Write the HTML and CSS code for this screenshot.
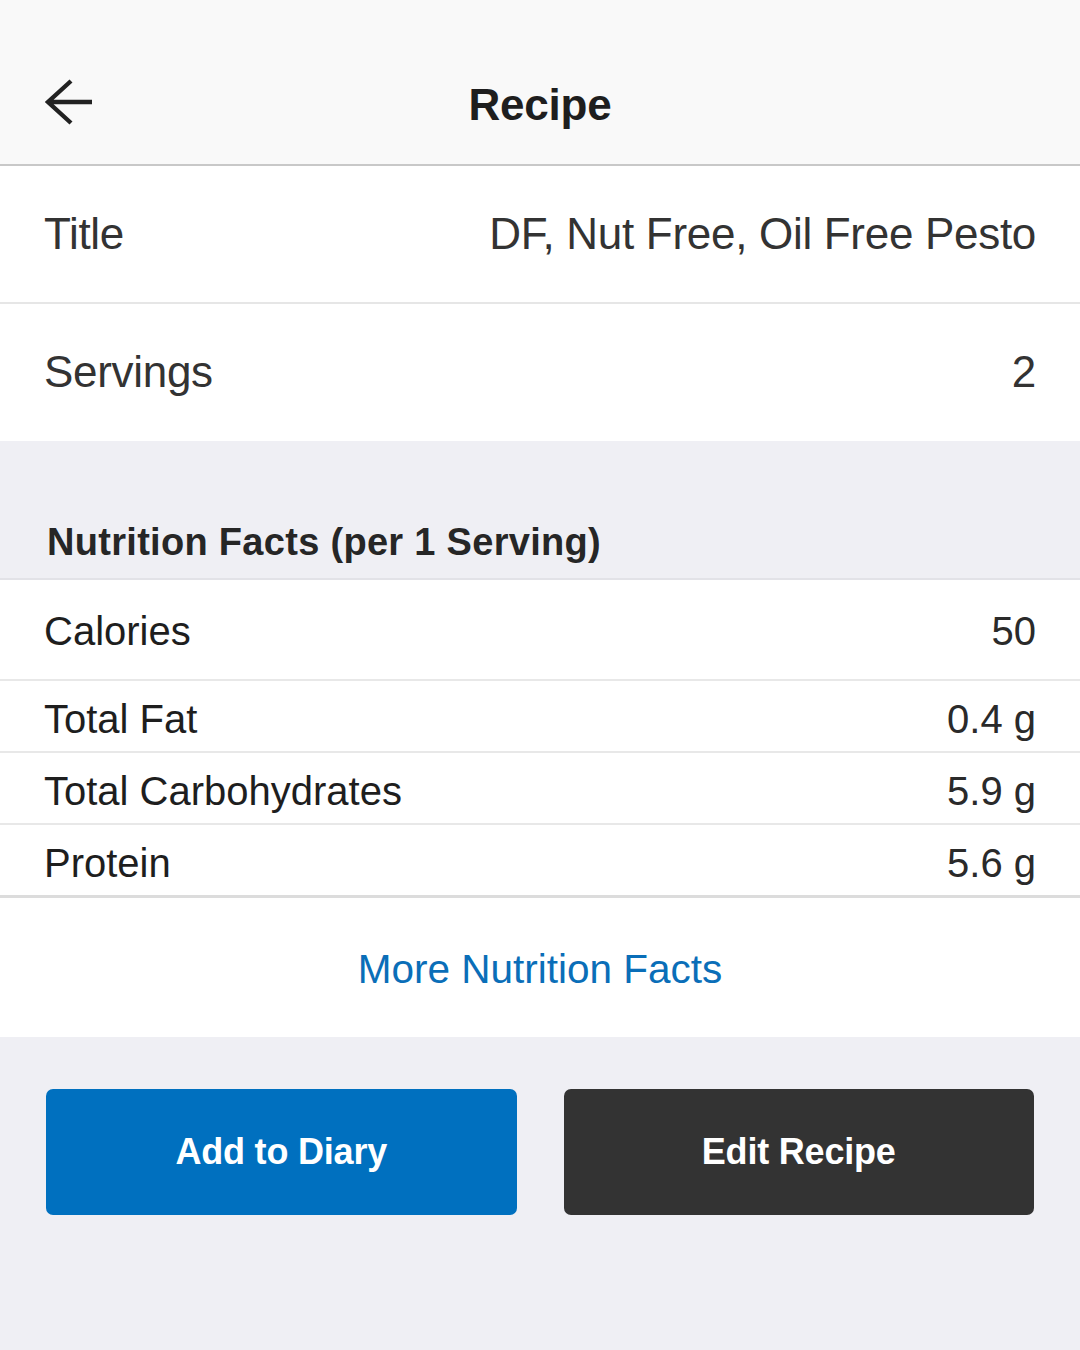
FILE: index.html
```html
<!DOCTYPE html>
<html lang="en">
<head>
<meta charset="utf-8">
<title>Recipe</title>
<link rel="stylesheet" href="styles.css">
</head>
<body>
<div class="screen">
  <header class="topbar">
    <button class="back" aria-label="Back">
      <svg class="back-icon" viewBox="0 0 48 52" width="48" height="52">
        <path d="M27 2 L4 23 L27 44 M4 23 H48" fill="none" stroke="#222" stroke-width="4.4" stroke-linejoin="miter"/>
      </svg>
    </button>
    <h1 class="topbar-title">Recipe</h1>
    <span class="topbar-spacer"></span>
  </header>

  <section class="group">
    <div class="field-row">
      <span class="field-label">Title</span>
      <span class="field-value">DF, Nut Free, Oil Free Pesto</span>
    </div>
    <div class="field-row field-row--last">
      <span class="field-label">Servings</span>
      <span class="field-value">2</span>
    </div>
  </section>

  <div class="section-head">
    <h2 class="section-title">Nutrition Facts (per 1 Serving)</h2>
  </div>

  <section class="nutrition">
    <div class="nut-row nut-row--cal">
      <span class="nut-label">Calories</span>
      <span class="nut-value">50</span>
    </div>
    <div class="nut-row">
      <span class="nut-label">Total Fat</span>
      <span class="nut-value">0.4 g</span>
    </div>
    <div class="nut-row">
      <span class="nut-label">Total Carbohydrates</span>
      <span class="nut-value">5.9 g</span>
    </div>
    <div class="nut-row nut-row--last">
      <span class="nut-label">Protein</span>
      <span class="nut-value">5.6 g</span>
    </div>
  </section>

  <div class="more">
    <a class="more-link" href="#">More Nutrition Facts</a>
  </div>

  <footer class="actions">
    <button class="btn btn--primary">Add to Diary</button>
    <button class="btn btn--dark">Edit Recipe</button>
  </footer>
</div>
</body>
</html>
```

FILE: styles.css
```css
* {
  box-sizing: border-box;
}

html, body {
  margin: 0;
  padding: 0;
  background: #efeff4;
}

body {
  font-family: "Liberation Sans", Arial, sans-serif;
  color: #222;
}

.screen {
  width: 1080px;
  min-height: 1350px;
  background: #efeff4;
  display: flex;
  flex-direction: column;
}

/* Top bar */
.topbar {
  display: grid;
  grid-template-columns: 1fr auto 1fr;
  align-items: start;
  padding: 79px 44px 33px;
  background: #f9f9f9;
  border-bottom: 2px solid #c8c8c8;
}

.back {
  justify-self: start;
  background: none;
  border: 0;
  padding: 0;
  margin: 0;
  width: 48px;
  height: 52px;
  display: block;
}

.back-icon {
  display: block;
}

.topbar-title {
  margin: 0;
  font-size: 44px;
  line-height: 52px;
  font-weight: 700;
  color: #1e1e1e;
  letter-spacing: -0.2px;
}

/* Title / Servings */
.group {
  background: #fff;
}

.field-row {
  display: flex;
  justify-content: space-between;
  align-items: center;
  padding: 42px 44px 42px;
  border-bottom: 2px solid #e6e6e6;
}

.field-row--last {
  padding: 42px 44px 43px;
  border-bottom: 0;
}

.field-label,
.field-value {
  font-size: 44px;
  line-height: 52px;
  color: #333;
  letter-spacing: -0.3px;
}

/* Section heading */
.section-head {
  height: 139px;
  display: flex;
  align-items: flex-end;
  padding: 0 47px 13px;
  background: #efeff4;
  border-bottom: 2px solid #e2e2e7;
}

.section-title {
  margin: 0;
  font-size: 38px;
  line-height: 46px;
  font-weight: 700;
  color: #262626;
  letter-spacing: 0.3px;
}

/* Nutrition rows */
.nutrition {
  background: #fff;
}

.nut-row {
  display: flex;
  justify-content: space-between;
  align-items: center;
  padding: 14px 44px 8px;
  border-bottom: 2px solid #e8e8e8;
}

.nut-row--cal {
  padding: 27px 44px 24px;
}

.nut-row--last {
  padding: 14px 44px 8px;
  border-bottom: 3px solid #dcdcdc;
}

.nut-label,
.nut-value {
  font-size: 40px;
  line-height: 48px;
  color: #1e1e1e;
  letter-spacing: 0;
}

.nut-value {
  color: #2a2a2a;
}

/* More link */
.more {
  background: #fff;
  display: flex;
  justify-content: center;
  padding: 47px 0 44px;
}

.more-link {
  font-size: 40.5px;
  line-height: 48px;
  color: #0a6eb8;
  text-decoration: none;
  letter-spacing: 0;
}

/* Actions */
.actions {
  display: grid;
  grid-template-columns: 1fr 1fr;
  gap: 47px;
  padding: 52px 46px;
  background: #efeff4;
}

.btn {
  height: 126px;
  border: 0;
  border-radius: 7px;
  font-family: "Liberation Sans", Arial, sans-serif;
  font-size: 36px;
  font-weight: 700;
  color: #fff;
  letter-spacing: -0.2px;
}

.btn--primary {
  background: #0070bf;
}

.btn--dark {
  background: #333333;
}
```
